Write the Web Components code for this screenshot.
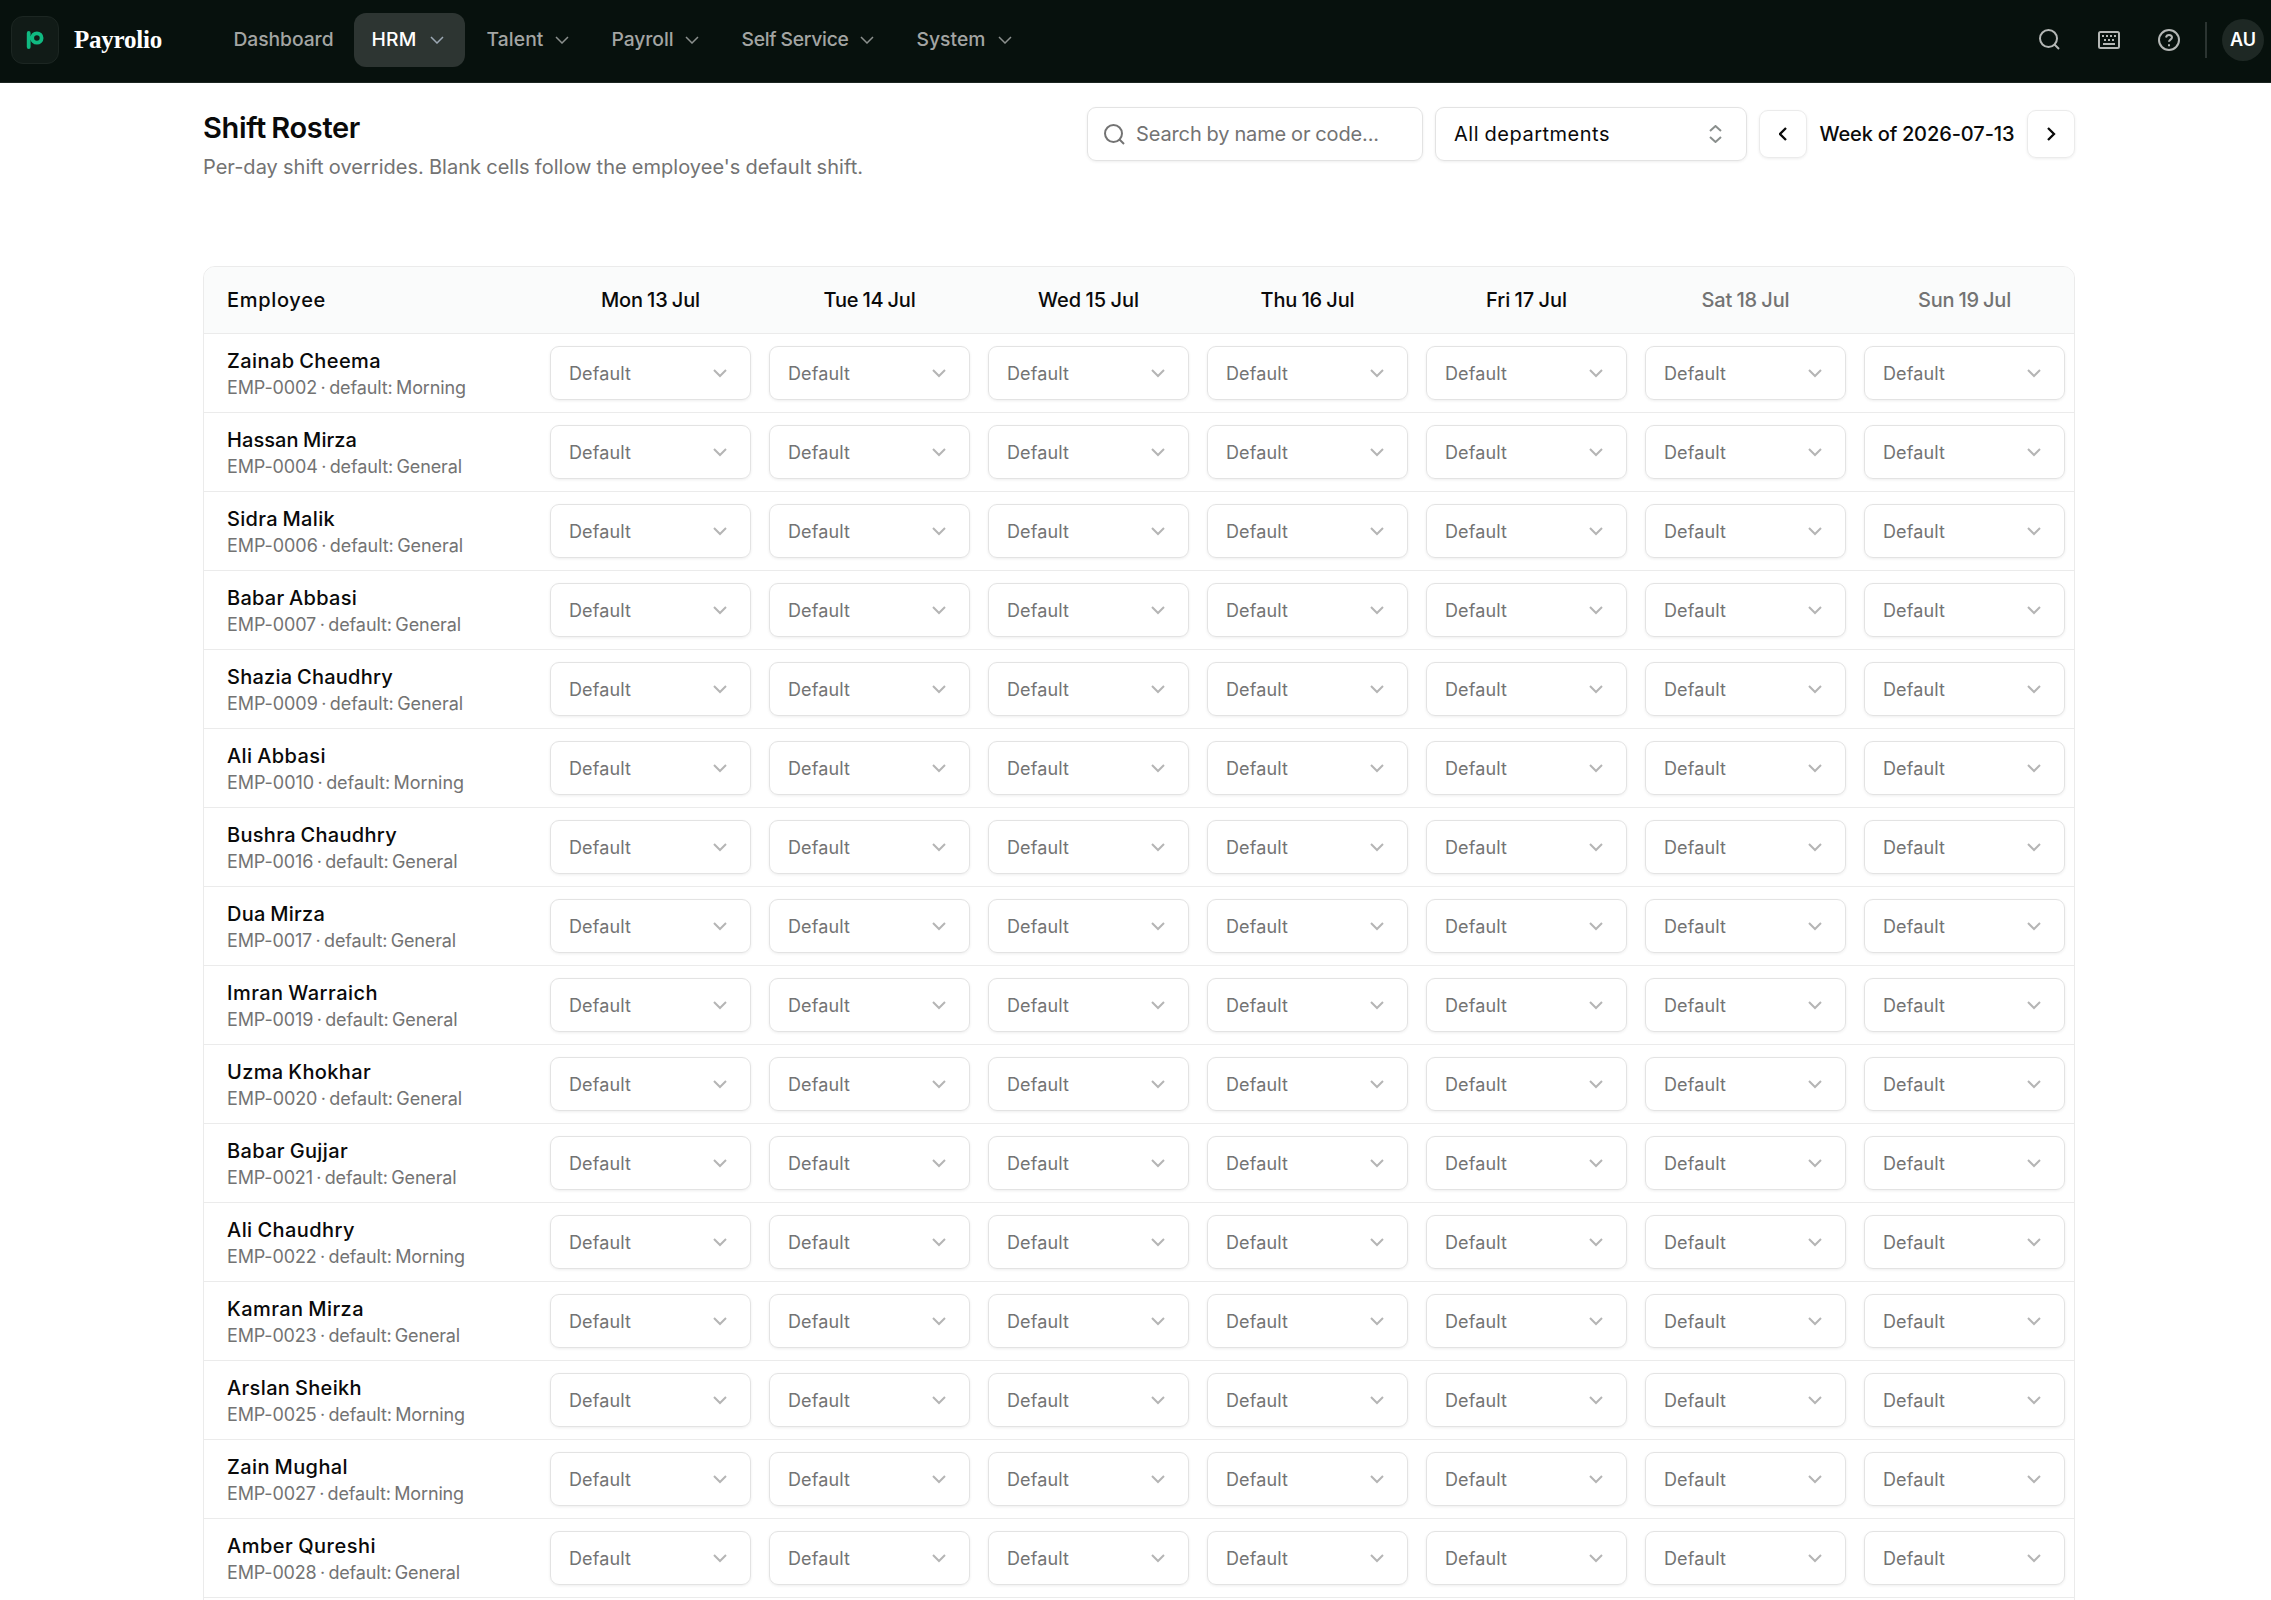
<!DOCTYPE html>
<html lang="en">
<head>
<meta charset="utf-8">
<title>Shift Roster - Payrolio</title>
<style>
  :root {
    --nav: #07110d;
    --ink: #0a0a0a;
    --muted: #737373;
    --line: #ebebeb;
    --input-line: #e3e3e3;
  }

  html, body {
    margin: 0;
    background: #fff;
  }

  body {
    height: 1600px;
    overflow: hidden;
    color: var(--ink);
    font-family: Inter, "Liberation Sans", sans-serif;
    word-spacing: -.5px;
  }
</style>
</head>
<body>
<payroll-app></payroll-app>

<script>
const SHADOW = 'box-shadow: 0 1px 3px rgba(0, 0, 0, .07);';

const ICONS = {
  down: '<path d="M1 1l6 6 6-6"/>',
  search: '<circle cx="9.5" cy="9.5" r="8.5"/><path d="M15.5 15.5L20 20"/>',
  keyboard: '<rect x="1" y="1" width="20" height="16" rx="1.5"/><path d="M4 5h2M8 5h2M12 5h2M16 5h2M6 9h2M10 9h2M14 9h2M5 13h12"/>',
  help: '<circle cx="11" cy="11" r="10"/><path d="M8 8.500c.3-1.700 1.500-2.600 3-2.600 1.700 0 3 1 3 2.600 0 2.100-3 2.200-3 4.300M11 15.200v2"/>',
  updown: '<path d="M1 6l5.500-5 5.500 5M1 12l5.500 5 5.500-5"/>',
  left: '<path d="M7 1L1 7l6 6"/>',
  right: '<path d="M1 1l6 6-6 6"/>'
};

const EMPLOYEES = [
  ['Zainab Cheema', 153, 'EMP-0002', 'Morning', 238],
  ['Hassan Mirza', 129, 'EMP-0004', 'General', 234],
  ['Sidra Malik', 107, 'EMP-0006', 'General', 235],
  ['Babar Abbasi', 129, 'EMP-0007', 'General', 233],
  ['Shazia Chaudhry', 165, 'EMP-0009', 'General', 235],
  ['Ali Abbasi', 98, 'EMP-0010', 'Morning', 236],
  ['Bushra Chaudhry', 169, 'EMP-0016', 'General', 229.5],
  ['Dua Mirza', 97, 'EMP-0017', 'General', 228],
  ['Imran Warraich', 150, 'EMP-0019', 'General', 229.5],
  ['Uzma Khokhar', 143, 'EMP-0020', 'General', 234],
  ['Babar Gujjar', 120, 'EMP-0021', 'General', 228.5],
  ['Ali Chaudhry', 127, 'EMP-0022', 'Morning', 237],
  ['Kamran Mirza', 136, 'EMP-0023', 'General', 232],
  ['Arslan Sheikh', 134, 'EMP-0025', 'Morning', 237],
  ['Zain Mughal', 120, 'EMP-0027', 'Morning', 236],
  ['Amber Qureshi', 148, 'EMP-0028', 'General', 232]
];

const DAYS = [
  ['Mon 13 Jul', 99], ['Tue 14 Jul', 92], ['Wed 15 Jul', 101], ['Thu 16 Jul', 94],
  ['Fri 17 Jul', 81], ['Sat 18 Jul', 88], ['Sun 19 Jul', 93]
];

const NAV = [
  ['Dashboard', 100, 134], ['HRM', 45, 111], ['Talent', 57, 121],
  ['Payroll', 62, 126], ['Self Service', 107, 171], ['System', 69, 134]
];

// Attaches an open shadow root with the given markup
function render(host, html) {
  host.attachShadow({ mode: 'open' }).innerHTML = html;
}

// Text tracked in or out to take up a given width
class FitText extends HTMLElement {
  connectedCallback() {
    render(this, `
      <style>
        :host { display: inline-block; white-space: nowrap; }
        span { display: inline-block; white-space: pre; }
      </style>
      <span><slot></slot></span>
    `);
    const span = this.shadowRoot.querySelector('span');
    const target = Number(this.getAttribute('width'));
    const gap = (target - span.getBoundingClientRect().width) / this.textContent.length;
    span.style.letterSpacing = `${gap}px`;
  }
}

class UiIcon extends HTMLElement {
  connectedCallback() {
    const [w, h] = this.getAttribute('size').split(' ');
    render(this, `
      <style>
        :host { display: block; flex: none; }
        svg {
          display: block;
          fill: none;
          stroke: currentColor;
          stroke-width: ${this.getAttribute('stroke') || 2};
        }
      </style>
      <svg width="${w}" height="${h}" viewBox="0 0 ${w} ${h}">${ICONS[this.getAttribute('name')]}</svg>
    `);
  }
}

class NavItem extends HTMLElement {
  connectedCallback() {
    const menu = this.hasAttribute('menu');
    render(this, `
      <style>
        :host {
          display: flex;
          align-items: center;
          justify-content: space-between;
          box-sizing: border-box;
          height: 54px;
          padding: 0 21px 2px 17.500px;
          border-radius: 12px;
          color: #a3a5a3;
          font-size: 19.3px;
          font-weight: 500;
        }
        :host([active]) { background: #2d3532; color: #fff; }
        ui-icon { color: #8b908e; margin-top: 3px; }
        :host([active]) ui-icon { color: #9ca8b4; }
      </style>
      <slot></slot>
      ${menu ? '<ui-icon name="down" size="14 8" stroke="1.5"></ui-icon>' : ''}
    `);
  }
}

class TopBar extends HTMLElement {
  connectedCallback() {
    const items = NAV.map(([label, width, box], i) => `
      <nav-item style="width:${box}px" ${i ? 'menu' : ''} ${label === 'HRM' ? 'active' : ''}><fit-text width="${width}">${label}</fit-text></nav-item>`).join('');
    render(this, `
      <style>
        :host {
          display: flex;
          align-items: center;
          box-sizing: border-box;
          height: 83px;
          padding: 0 7px 3px 11px;
          background: var(--nav);
          border-bottom: 1px solid #1b2521;
        }
        .logo {
          display: grid;
          place-items: center;
          box-sizing: border-box;
          width: 48px;
          height: 48px;
          border: 1px solid #1c2622;
          border-radius: 12px;
          background: #111b17;
        }
        .brand {
          width: 141px;
          padding-left: 15px;
          box-sizing: border-box;
          margin-right: 16px;
          color: #fff;
          font: bold 25px "Liberation Serif", serif;
        }
        nav { display: flex; gap: 4px; flex: 1; }
        .tools { display: flex; align-items: center; color: #b4b7b5; }
        .rule { width: 2px; height: 36px; margin: 0 15px 0 25px; background: #2b3431; }
        .avatar {
          display: grid;
          place-items: center;
          width: 42px;
          height: 42px;
          border-radius: 50%;
          background: #1e2824;
          color: #fff;
          font-size: 18px;
          font-weight: 600;
        }
      </style>
      <div class="logo">
        <svg width="18" height="20" viewBox="0 0 18 20" fill="none" stroke="#10b981" stroke-width="3.800">
          <path d="M2.700 2.900v14.200" stroke-linecap="round"/><circle cx="10.900" cy="8" r="4.700"/><path d="M2.700 8h4"/>
        </svg>
      </div>
      <div class="brand"><fit-text width="88">Payrolio</fit-text></div>
      <nav>${items}</nav>
      <div class="tools">
        <ui-icon name="search" size="21 21"></ui-icon>
        <ui-icon name="keyboard" size="22 18" style="margin:0 38px"></ui-icon>
        <ui-icon name="help" size="22 22"></ui-icon>
        <div class="rule"></div>
        <div class="avatar"><fit-text width="26">AU</fit-text></div>
      </div>
    `);
  }
}

class PageHeader extends HTMLElement {
  connectedCallback() {
    render(this, `
      <style>
        :host { display: flex; justify-content: space-between; height: 159px; }
        h1 { margin: 0; padding-top: 1px; font-size: 29px; line-height: 40px; font-weight: 600; word-spacing: -1.500px; }
        p { margin: 5px 0 0; font-size: 20px; line-height: 28px; color: var(--muted); }
        .tools { display: flex; align-items: center; gap: 12px; height: 54px; font-size: 20px; }
        .box {
          display: flex;
          align-items: center;
          box-sizing: border-box;
          height: 54px;
          border: 1px solid var(--input-line);
          border-radius: 9px;
          ${SHADOW}
        }
        .search { width: 336px; padding-left: 16px; gap: 11px; color: var(--muted); }
        .dept { width: 312px; padding: 0 24px 0 18px; justify-content: space-between; }
        .dept ui-icon { color: #8a8f8d; }
        .step { width: 48px; height: 48px; justify-content: center; border-color: var(--line); }
        .week { width: 196px; text-align: center; font-weight: 500; }
      </style>
      <div>
        <h1><fit-text width="157">Shift Roster</fit-text></h1>
        <p><fit-text width="660">Per-day shift overrides. Blank cells follow the employee's default shift.</fit-text></p>
      </div>
      <div class="tools">
        <div class="box search">
          <ui-icon name="search" size="21 21"></ui-icon>
          <fit-text width="243">Search by name or code...</fit-text>
        </div>
        <div class="box dept">
          <fit-text width="156">All departments</fit-text>
          <ui-icon name="updown" size="13 18"></ui-icon>
        </div>
        <div class="box step"><ui-icon name="left" size="9 14" stroke="2.300"></ui-icon></div>
        <div class="week"><fit-text width="195">Week of 2026-07-13</fit-text></div>
        <div class="box step"><ui-icon name="right" size="9 14" stroke="2.300"></ui-icon></div>
      </div>
    `);
  }
}

class ShiftSelect extends HTMLElement {
  connectedCallback() {
    render(this, `
      <style>
        :host {
          display: flex;
          align-items: center;
          justify-content: space-between;
          box-sizing: border-box;
          height: 54px;
          margin: 0 9px;
          padding: 0 23px 0 18px;
          border: 1px solid var(--input-line);
          border-radius: 9px;
          color: var(--muted);
          font-size: 18px;
          ${SHADOW}
        }
        ui-icon { color: #b5b5b5; }
      </style>
      <fit-text width="62">Default</fit-text>
      <ui-icon name="down" size="14 9"></ui-icon>
    `);
  }
}

class RosterRow extends HTMLElement {
  connectedCallback() {
    const [name, nameWidth, code, shift, metaWidth] = EMPLOYEES[this.getAttribute('index')];
    render(this, `
      <style>
        :host {
          display: grid;
          grid-template-columns: 337px repeat(7, 219px);
          align-items: center;
          box-sizing: border-box;
          height: 79px;
          border-bottom: 1px solid var(--line);
        }
        .who { padding: 1px 0 0 23px; }
        .name { font-size: 20px; line-height: 28px; font-weight: 500; word-spacing: -1px; }
        .meta { font-size: 18px; line-height: 26px; color: var(--muted); word-spacing: -1.500px; }
      </style>
      <div class="who">
        <div class="name"><fit-text width="${nameWidth + 1}">${name}</fit-text></div>
        <div class="meta"><fit-text width="${metaWidth + 1}">${code} · default: ${shift}</fit-text></div>
      </div>
      ${'<shift-select></shift-select>'.repeat(7)}
    `);
  }
}

class RosterTable extends HTMLElement {
  connectedCallback() {
    const days = DAYS.map(([day, width], i) =>
      `<div class="day ${i > 4 ? 'weekend' : ''}"><fit-text width="${width}">${day}</fit-text></div>`).join('');
    const rows = EMPLOYEES.map((_, i) => `<roster-row index="${i}"></roster-row>`).join('');
    render(this, `
      <style>
        :host {
          display: block;
          box-sizing: border-box;
          height: 1400px;
          border: 1px solid var(--line);
          border-radius: 12px;
          overflow: hidden;
        }
        .head {
          display: grid;
          grid-template-columns: 337px repeat(7, 219px);
          align-items: center;
          box-sizing: border-box;
          height: 67px;
          border-bottom: 1px solid var(--line);
          background: #fafbfb;
          font-size: 20px;
          font-weight: 500;
          word-spacing: -1px;
        }
        .employee { padding-left: 23px; }
        .day { text-align: center; }
        .weekend { color: var(--muted); }
      </style>
      <div class="head">
        <div class="employee"><fit-text width="99">Employee</fit-text></div>
        ${days}
      </div>
      ${rows}
    `);
  }
}

class PayrollApp extends HTMLElement {
  connectedCallback() {
    render(this, `
      <style>
        :host { display: block; }
        main { width: 1872px; padding: 24px 0 0 203px; }
      </style>
      <top-bar></top-bar>
      <main>
        <page-header></page-header>
        <roster-table></roster-table>
      </main>
    `);
  }
}

customElements.define('fit-text', FitText);
customElements.define('ui-icon', UiIcon);
customElements.define('nav-item', NavItem);
customElements.define('top-bar', TopBar);
customElements.define('page-header', PageHeader);
customElements.define('shift-select', ShiftSelect);
customElements.define('roster-row', RosterRow);
customElements.define('roster-table', RosterTable);
customElements.define('payroll-app', PayrollApp);
</script>
</body>
</html>
